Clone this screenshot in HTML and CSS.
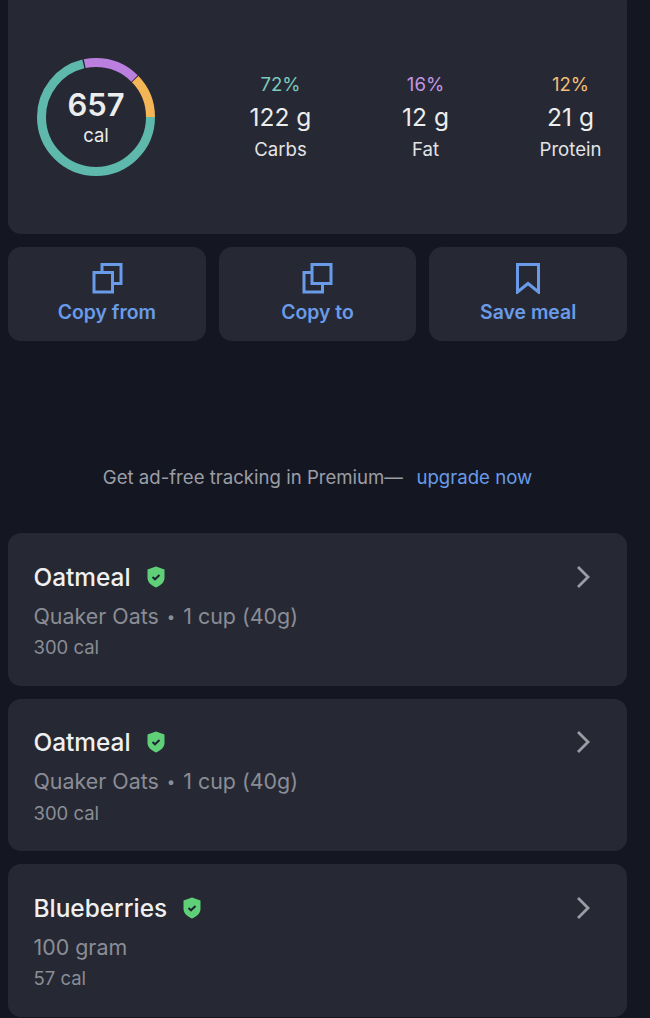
FILE: index.html
```html
<!DOCTYPE html>
<html lang="en">
<head>
<meta charset="utf-8">
<title>Meal</title>
<link rel="stylesheet" href="styles.css">
</head>
<body>
<main class="page">
  <section class="card summary">
    <div class="ring">
      <svg class="ring-svg" viewBox="0 0 120 120" width="120" height="120" aria-hidden="true">
        <circle class="seg teal" cx="60" cy="60" r="54.5" pathLength="360" stroke-dasharray="256.5 103.5"/>
        <circle class="seg purple" cx="60" cy="60" r="54.5" pathLength="360" stroke-dasharray="57 303" stroke-dashoffset="-258"/>
        <circle class="seg orange" cx="60" cy="60" r="54.5" pathLength="360" stroke-dasharray="44 316" stroke-dashoffset="-316"/>
      </svg>
      <div class="ring-label">
        <span class="ring-num">657</span>
        <span class="ring-unit">cal</span>
      </div>
    </div>
    <div class="macros">
      <div class="macro"><span class="pct teal-t">72%</span><span class="grams">122 g</span><span class="name">Carbs</span></div>
      <div class="macro"><span class="pct purple-t">16%</span><span class="grams">12 g</span><span class="name">Fat</span></div>
      <div class="macro"><span class="pct orange-t">12%</span><span class="grams">21 g</span><span class="name">Protein</span></div>
    </div>
  </section>

  <section class="actions">
    <div class="card action">
      <svg class="act-icon" viewBox="0 0 32 32" width="32" height="32" aria-hidden="true"><rect x="11" y="2.5" width="19" height="19"/><rect x="3" y="10.5" width="18.5" height="19.5" class="filled"/></svg>
      <span>Copy from</span>
    </div>
    <div class="card action">
      <svg class="act-icon" viewBox="0 0 32 32" width="32" height="32" aria-hidden="true"><rect x="3" y="10.5" width="18.5" height="19.5"/><rect x="11" y="2.5" width="19" height="19" class="filled"/></svg>
      <span>Copy to</span>
    </div>
    <div class="card action">
      <svg class="act-icon" viewBox="0 0 32 32" width="32" height="32" aria-hidden="true"><path d="M5.5 2.5H26.5V30L16 21.5L5.5 30Z"/></svg>
      <span>Save meal</span>
    </div>
  </section>

  <p class="promo"><span>Get ad-free tracking in Premium—</span><a class="link">upgrade now</a></p>

  <section class="foods">
    <article class="card food">
      <div class="food-text">
        <h2 class="food-title">Oatmeal<svg class="shield" viewBox="0 0 18 22" width="18" height="22" aria-hidden="true"><path class="sh" d="M9 0.5L17.5 3.5V12C17.5 16.5 13.5 19.5 9 21.5C4.5 19.5 0.5 16.5 0.5 12V3.5Z"/><path class="ck" d="M5.5 11L8 13.3L12.5 9"/></svg></h2>
        <p class="food-sub">Quaker Oats <span class="dot">•</span> 1 cup (40g)</p>
        <p class="food-cal">300 cal</p>
      </div>
      <svg class="chev" viewBox="0 0 16 24" width="16" height="24" aria-hidden="true"><path d="M3 2L13 12L3 22"/></svg>
    </article>
    <article class="card food">
      <div class="food-text">
        <h2 class="food-title">Oatmeal<svg class="shield" viewBox="0 0 18 22" width="18" height="22" aria-hidden="true"><path class="sh" d="M9 0.5L17.5 3.5V12C17.5 16.5 13.5 19.5 9 21.5C4.5 19.5 0.5 16.5 0.5 12V3.5Z"/><path class="ck" d="M5.5 11L8 13.3L12.5 9"/></svg></h2>
        <p class="food-sub">Quaker Oats <span class="dot">•</span> 1 cup (40g)</p>
        <p class="food-cal">300 cal</p>
      </div>
      <svg class="chev" viewBox="0 0 16 24" width="16" height="24" aria-hidden="true"><path d="M3 2L13 12L3 22"/></svg>
    </article>
    <article class="card food">
      <div class="food-text">
        <h2 class="food-title">Blueberries<svg class="shield" viewBox="0 0 18 22" width="18" height="22" aria-hidden="true"><path class="sh" d="M9 0.5L17.5 3.5V12C17.5 16.5 13.5 19.5 9 21.5C4.5 19.5 0.5 16.5 0.5 12V3.5Z"/><path class="ck" d="M5.5 11L8 13.3L12.5 9"/></svg></h2>
        <p class="food-sub">100 gram</p>
        <p class="food-cal">57 cal</p>
      </div>
      <svg class="chev" viewBox="0 0 16 24" width="16" height="24" aria-hidden="true"><path d="M3 2L13 12L3 22"/></svg>
    </article>
  </section>
</main>
</body>
</html>
```
FILE: styles.css
```css
html, body {
  margin: 0;
  height: 100%;
  overflow: hidden;
  background: #141722;
}
body {
  font-family: Inter, "Liberation Sans", sans-serif;
  color: #eceded;
}
.page {
  padding: 0 23px 0 8px;
  margin-top: -10px;
}
.card {
  background: #262933;
  border-radius: 13px;
}
.summary {
  height: 244px;
  box-sizing: border-box;
  display: flex;
  align-items: flex-start;
  padding: 66.5px 0 0 28px;
}
.ring {
  position: relative;
  width: 120px;
  height: 120px;
  flex: none;
}
.ring-svg { display: block; }
.seg {
  fill: none;
  stroke-width: 9;
}
.teal { stroke: #5eb8ac; }
.purple { stroke: #bb7fdf; }
.orange { stroke: #f4b557; }
.ring-label {
  position: absolute;
  inset: 0;
  display: flex;
  flex-direction: column;
  align-items: center;
  justify-content: center;
}
.ring-num {
  font-size: 31px;
  line-height: 36px;
  font-weight: 600;
}
.ring-unit {
  font-size: 18.5px;
  line-height: 24px;
}
.macros {
  display: grid;
  grid-template-columns: repeat(3, 145px);
  margin-left: 52px;
  margin-top: 8px;
}
.macro {
  display: flex;
  flex-direction: column;
  align-items: center;
}
.pct {
  font-size: 18.6px;
  line-height: 22px;
  margin-top: 8px;
}
.teal-t { color: #7ccabd; }
.purple-t { color: #c596e3; }
.orange-t { color: #f3bd78; }
.grams {
  font-size: 24.5px;
  line-height: 30px;
  margin-top: 7.5px;
}
.name {
  font-size: 18.6px;
  line-height: 24px;
  margin-top: 5px;
  color: #e2e3e5;
}
.actions {
  display: grid;
  grid-template-columns: repeat(3, 1fr);
  gap: 13px;
  margin-top: 13px;
}
.action {
  height: 94px;
  display: flex;
  flex-direction: column;
  align-items: center;
  padding-top: 15px;
  box-sizing: border-box;
  color: #699be9;
  font-size: 19.4px;
  line-height: 24px;
  font-weight: 600;
}
.action span { margin-top: 6px; }
.act-icon { display: block; }
.act-icon rect, .act-icon path {
  fill: none;
  stroke: #699be9;
  stroke-width: 3;
}
.act-icon .filled { fill: #262933; }
.promo {
  margin: 124px 0 0;
  display: flex;
  justify-content: center;
  gap: 13.5px;
  font-size: 18.6px;
  line-height: 24px;
  color: #9c9ea6;
}
.link { color: #699be9; }
.foods {
  display: flex;
  flex-direction: column;
  gap: 13px;
  margin-top: 44px;
}
.food {
  height: 152.5px;
  box-sizing: border-box;
  display: flex;
  justify-content: space-between;
  align-items: flex-start;
  padding: 27.5px 36px 0 25.5px;
}
.food-title {
  margin: 0;
  display: flex;
  align-items: center;
  gap: 16px;
  font-size: 24.4px;
  line-height: 32px;
  font-weight: 500;
  color: #f0f0f1;
}
.shield { display: block; }
.sh { fill: #5fcf78; }
.ck {
  fill: none;
  stroke: #1f2430;
  stroke-width: 2;
}
.food-sub {
  margin: 9px 0 0;
  height: 28px;
  font-size: 21.4px;
  line-height: 28px;
  color: #8b8d96;
}
.dot {
  font-size: 15px;
  line-height: 0;
  margin: 0 2px;
  vertical-align: 2px;
}
.food-cal {
  margin: 5.5px 0 0;
  font-size: 18.5px;
  line-height: 24px;
  color: #8b8d96;
}
.chev {
  display: block;
  margin-top: 4px;
}
.chev path {
  fill: none;
  stroke: #9b9da6;
  stroke-width: 2.8;
}
```
